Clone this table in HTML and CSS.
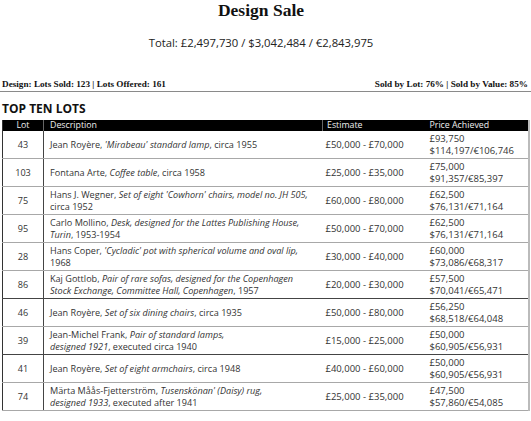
FILE: index.html
```html
<!DOCTYPE html>
<html lang="en">
<head>
<meta charset="utf-8">
<title>Design Sale</title>
<link rel="stylesheet" href="styles.css">
</head>
<body>
<h1 class="title">Design Sale</h1>
<p class="total">Total: £2,497,730 / $3,042,484 / €2,843,975</p>
<div class="stats">
  <span>Design: Lots Sold: 123 | Lots Offered: 161</span>
  <span>Sold by Lot: 76% | Sold by Value: 85%</span>
</div>
<div class="section">
  <h2 class="heading">TOP TEN LOTS</h2>
  <table class="lots">
    <colgroup>
      <col class="c-lot"><col class="c-desc"><col class="c-est"><col class="c-price">
    </colgroup>
    <thead>
      <tr><th class="lot">Lot</th><th class="desc">Description</th><th class="est">Estimate</th><th class="price">Price Achieved</th></tr>
    </thead>
    <tbody>
      <tr><td class="lot">43</td><td class="desc">Jean Royère, <i>'Mirabeau' standard lamp</i>, circa 1955</td><td class="est">£50,000 - £70,000</td><td class="price">£93,750<br>$114,197/€106,746</td></tr>
      <tr><td class="lot">103</td><td class="desc">Fontana Arte, <i>Coffee table</i>, circa 1958</td><td class="est">£25,000 - £35,000</td><td class="price">£75,000<br>$91,357/€85,397</td></tr>
      <tr><td class="lot">75</td><td class="desc">Hans J. Wegner, <i>Set of eight 'Cowhorn' chairs, model no. JH 505,</i><br>circa 1952</td><td class="est">£60,000 - £80,000</td><td class="price">£62,500<br>$76,131/€71,164</td></tr>
      <tr><td class="lot">95</td><td class="desc">Carlo Mollino, <i>Desk, designed for the Lattes Publishing House,<br>Turin</i>, 1953-1954</td><td class="est">£50,000 - £70,000</td><td class="price">£62,500<br>$76,131/€71,164</td></tr>
      <tr><td class="lot">28</td><td class="desc">Hans Coper, <i>'Cycladic' pot with spherical volume and oval lip,</i><br>1968</td><td class="est">£30,000 - £40,000</td><td class="price">£60,000<br>$73,086/€68,317</td></tr>
      <tr class="dark"><td class="lot">86</td><td class="desc">Kaj Gottlob, <i>Pair of rare sofas, designed for the Copenhagen<br>Stock Exchange, Committee Hall, Copenhagen</i>, 1957</td><td class="est">£20,000 - £30,000</td><td class="price">£57,500<br>$70,041/€65,471</td></tr>
      <tr><td class="lot">46</td><td class="desc">Jean Royère, <i>Set of six dining chairs</i>, circa 1935</td><td class="est">£50,000 - £80,000</td><td class="price">£56,250<br>$68,518/€64,048</td></tr>
      <tr class="dark"><td class="lot">39</td><td class="desc">Jean-Michel Frank, <i>Pair of standard lamps,<br>designed 1921</i>, executed circa 1940</td><td class="est">£15,000 - £25,000</td><td class="price">£50,000<br>$60,905/€56,931</td></tr>
      <tr><td class="lot">41</td><td class="desc">Jean Royère, <i>Set of eight armchairs</i>, circa 1948</td><td class="est">£40,000 - £60,000</td><td class="price">£50,000<br>$60,905/€56,931</td></tr>
      <tr><td class="lot">74</td><td class="desc">Märta Måås-Fjetterström, <i>Tusenskönan' (Daisy) rug,<br>designed 1933</i>, executed after 1941</td><td class="est">£25,000 - £35,000</td><td class="price">£47,500<br>$57,860/€54,085</td></tr>
    </tbody>
  </table>
</div>
</body>
</html>
```

FILE: styles.css
```css
html, body {
  margin: 0;
  padding: 0;
  background: #fff;
}

body {
  width: 531px;
  color: #222;
}

.title {
  margin: 0;
  padding-right: 9px;
  font-family: "Liberation Serif", serif;
  font-weight: bold;
  font-size: 17.5px;
  line-height: 20px;
  text-align: center;
  color: #111;
}

.total {
  margin: 16px 0 0;
  padding-right: 9px;
  font-family: "Open Sans", sans-serif;
  font-size: 11.3px;
  line-height: 14px;
  text-align: center;
  color: #222;
}

.stats {
  margin-top: 29px;
  padding: 0 3px 1px 2px;
  display: flex;
  justify-content: space-between;
  font-family: "Liberation Serif", serif;
  font-weight: bold;
  font-size: 9.2px;
  line-height: 11px;
  color: #111;
  border-bottom: 1px solid #8a8a8a;
}

.section {
  padding: 0 3px 0 2px;
}

.heading {
  margin: 10px 0 4px;
  font-family: "Open Sans", sans-serif;
  font-weight: bold;
  font-size: 12px;
  line-height: 14px;
  color: #111;
}

.lots {
  width: 526px;
  table-layout: fixed;
  border-collapse: collapse;
  font-family: "Open Sans", sans-serif;
  font-size: 9.1px;
  color: #333;
  border-left: 1px solid #333;
  border-right: 2px solid #bbb;
  border-bottom: 1px solid #777;
}

.c-lot { width: 41px; }
.c-desc { width: 279px; }
.c-est { width: 104px; }
.c-price { width: 102px; }

.lots th {
  background: #000;
  color: #eee;
  font-weight: normal;
  font-size: 8.8px;
  line-height: 11px;
  height: 11px;
  padding: 0;
  text-align: left;
}

.lots th.lot {
  text-align: center;
}

.lots th.desc {
  padding-left: 6px;
  border-left: 1px solid #666;
}

.lots th.est {
  padding-left: 4px;
  border-left: 1px solid #666;
}

.lots th.price {
  padding-left: 3px;
}

.lots td {
  height: 24px;
  padding: 2px 0 1px;
  line-height: 12px;
  vertical-align: middle;
  border-bottom: 1px solid #a8a8a8;
}

.lots tr.dark td {
  border-bottom-color: #444;
}

.lots td.lot {
  text-align: center;
  border-right: 1px solid #444;
}

.lots td.desc {
  padding-left: 6px;
}

.lots td.est {
  padding-left: 3px;
  font-size: 9.5px;
}

.lots td.price {
  padding-left: 3px;
  font-size: 9.5px;
}
```
